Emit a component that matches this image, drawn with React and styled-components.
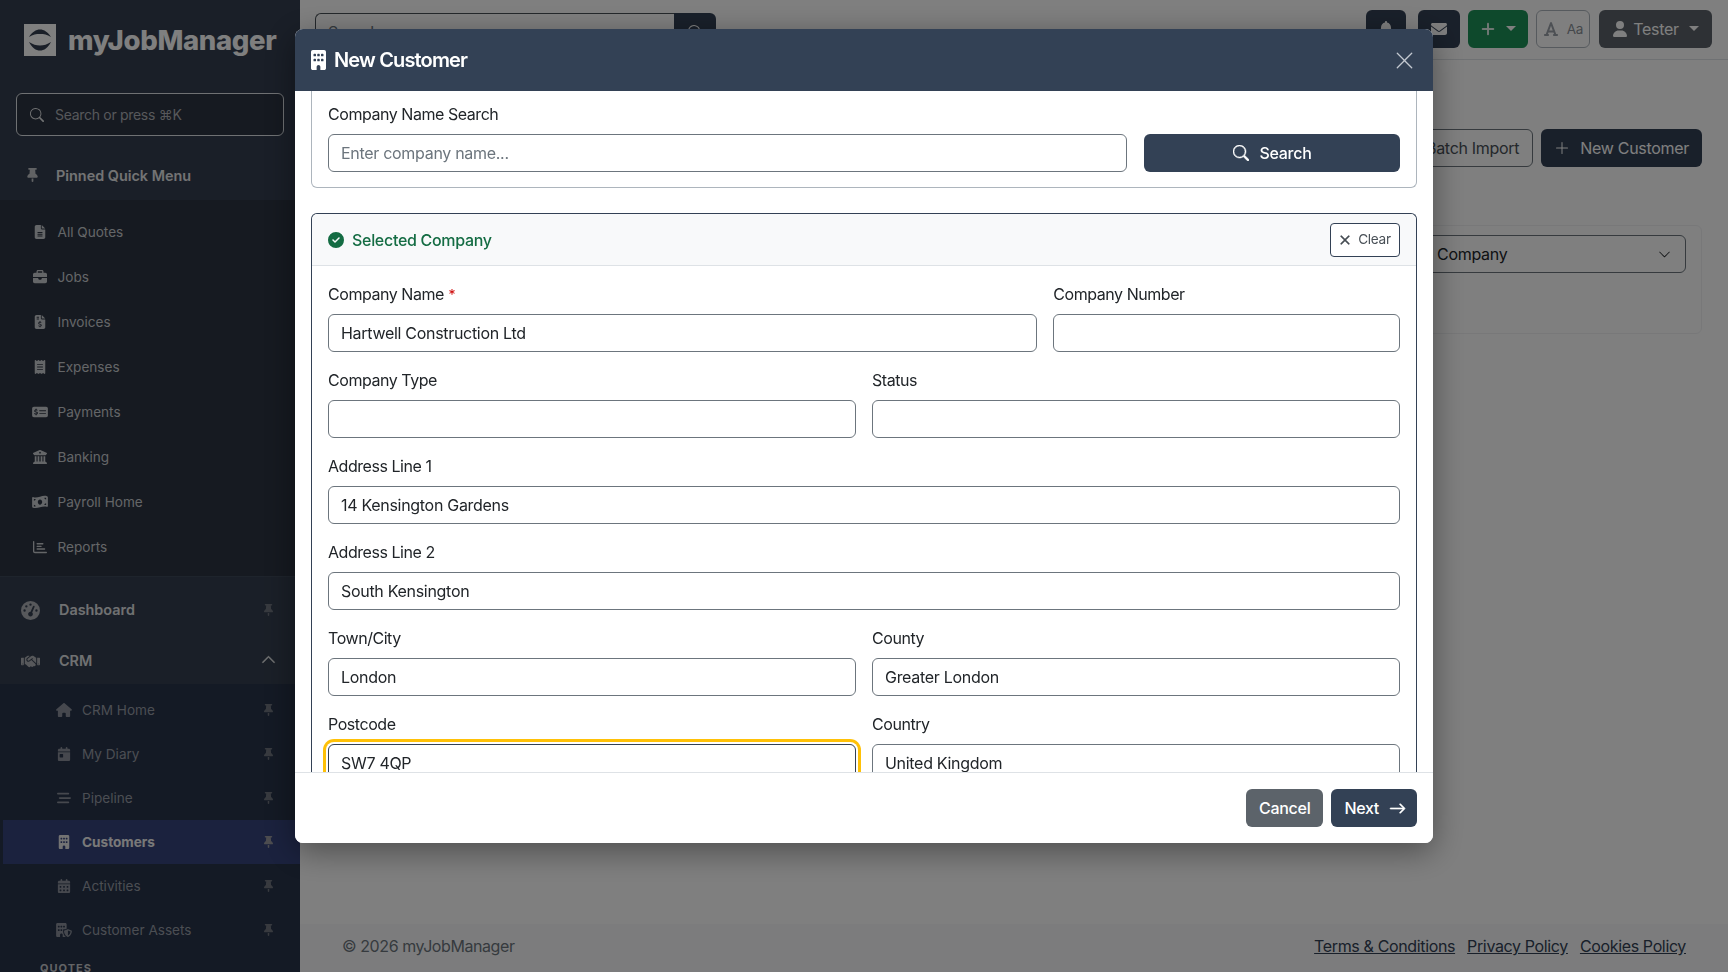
import React from 'react';
import styled, { createGlobalStyle } from 'styled-components';
import {
  FaFileLines, FaBriefcase, FaFileInvoiceDollar, FaReceipt, FaMoneyCheckDollar, FaBuildingColumns,
  FaMoneyBillWave, FaRegChartBar, FaThumbtack, FaGaugeHigh, FaHandshake, FaHouse, FaCalendarDay,
  FaBarsStaggered, FaBuilding, FaCalendarDays, FaBuildingShield, FaCircleCheck, FaEnvelope, FaBell, FaUser, FaFont,
} from 'react-icons/fa6';
import { BsSearch, BsX, BsPlusLg, BsArrowRight, BsXLg, BsChevronUp, BsChevronDown } from 'react-icons/bs';

const Global = createGlobalStyle`
  html, body { margin: 0; padding: 0; height: 100%; overflow: hidden; }
  body { font-family: Inter, "Liberation Sans", sans-serif; font-size: 16px; line-height: 1.5; color: #212529; background: #fff; letter-spacing: -.3px; }
  * { box-sizing: border-box; }
`;

const Shell = styled.div`display: flex; width: 1728px; height: 972px; overflow: hidden;`;

/* Sidebar */
const Sidebar = styled.aside`
  width: 300px; flex: none; height: 972px; overflow: hidden; background: #343e50; letter-spacing: 0;
  display: flex; flex-direction: column;
`;
const Brand = styled.div`display: flex; flex: none; gap: 12px; padding: 24px 0 0 24px; height: 93px; align-items: flex-start;`;
const BrandName = styled.span`
  font-family: Inter, sans-serif; font-weight: 800; font-size: 27.5px; line-height: 32px; color: #fff; letter-spacing: -.33px;
`;
const SideSearch = styled.div`
  margin: 0 16px; height: 43px; flex: none; border: 1px solid #dee2e6; border-radius: 6px; background: #2c3442;
  display: flex; align-items: center; gap: 11px; padding: 0 13px; color: #e0e2e4; font-size: 14px; letter-spacing: -.3px;
`;
const SidePlaceholder = styled.span`color: #aeb1b6;`;
const QuickHead = styled.div`
  height: 64px; flex: none; padding: 16px 0 0 27px; display: flex; align-items: center; gap: 18px;
  color: #e6e7e9; font-size: 14.4px; font-weight: 600;
  svg { width: 11px; height: 14px; margin-top: -3px; color: #c2c4c8; flex: none; }
`;
const QuickList = styled.div`background: #2c3442; padding: 10px 0 6px; border-bottom: 1px solid #3d4858; flex: none;`;
const QuickItem = styled.div`
  height: 45px; display: flex; align-items: center; padding-left: 32px; color: #c9ccd0; font-size: 13.6px;
`;
const QuickIcon = styled.span`
  width: 16px; display: flex; justify-content: center; margin-right: 9.5px; margin-top: -2px;
  svg { width: 16px; height: 14px; flex: none; }
`;
const MainRow = styled.div`
  height: ${p => p.$h}px; flex: none; display: flex; align-items: center; padding: ${p => p.$pt || 0}px 27px 0 20px; background: #353f50;
  color: #e0e2e5; font-size: 14.4px; font-weight: 600;
`;
const MainIcon = styled.span`width: 20px; display: flex; justify-content: center; margin-right: 19px; font-size: 19px; color: #aeb1b6;`;
const Spacer = styled.span`flex: 1;`;
const PinIcon = styled.span`
  display: flex; width: 9px; justify-content: center; color: ${p => p.$c || '#70757f'}; margin-top: -1px;
  svg { width: 9px; height: 12px; flex: none; }
`;
const Chevron = styled.span`display: flex; font-size: 15px; color: #e8e9ea; margin-right: -3px; margin-top: -4px; svg { stroke: currentColor; stroke-width: .6; }`;
const SubList = styled.div`background: #28344a; padding-top: 4px; flex: 1;`;
const SubItem = styled.div`
  height: 44px; display: flex; align-items: center; padding: 0 27px 0 56px; margin-left: 3px;
  font-size: 13.6px; font-weight: ${p => (p.$active ? 700 : 400)};
  color: ${p => (p.$active ? '#f2f2f2' : '#979ca6')};
  background: ${p => (p.$active ? '#36447c' : 'transparent')};
`;
const SubIcon = styled.span`
  width: 16px; margin-left: -3px; margin-right: 10px; display: flex; justify-content: center;
  color: ${p => (p.$active ? '#e6e6e6' : '#8c919c')};
  svg { width: 16px; height: 14px; flex: none; }
`;
const SideCaption = styled.div`
  font-size: 11px; font-weight: 700; letter-spacing: 1px; color: #c6c8cc; padding: 8px 0 0 40px;
`;

/* Page behind */
const Main = styled.div`flex: 1; display: flex; flex-direction: column; min-width: 0;`;
const Topbar = styled.header`
  height: 60px; flex: none; display: flex; align-items: flex-start; padding: 10px 16px 0 15px; background: #fff; border-bottom: 1px solid #dee2e6;
`;
const TopSearch = styled.div`display: flex; margin-top: 3px;`;
const TopInput = styled.div`
  width: 359px; height: 38px; border: 1px solid #495057; border-right: 0; border-radius: 6px 0 0 6px; padding: 0 12px;
  line-height: 36px; font-size: 16px; color: #6c757d;
`;
const TopSearchBtn = styled.div`
  width: 42px; height: 38px; background: #334155; color: #fff; border-radius: 0 6px 6px 0; display: flex; align-items: center; justify-content: center; font-size: 15px;
`;
const TopActions = styled.div`margin-left: auto; display: flex; gap: 8px;`;
const TopBtn = styled.div`
  height: 38px; width: ${p => p.$w}px; margin-left: ${p => p.$ml || 0}px; border-radius: 6px; display: flex; align-items: center; justify-content: center;
  background: ${p => p.$bg}; color: ${p => p.$fg || '#fff'}; border: ${p => p.$border ? '1px solid #adb5bd' : '0'}; gap: ${p => p.$gap || 0}px; font-size: 16px;
`;
const StrongPlus = styled(BsPlusLg)`stroke: currentColor; stroke-width: .7;`;
const UserIcon = styled(FaUser)`margin-right: -3px;`;
const TesterName = styled.span`margin-right: 2px;`;
const Caret = styled.span`width: 0; height: 0; border-left: 5px solid transparent; border-right: 5px solid transparent; border-top: 5px solid currentColor; margin-top: -2px;`;
const SmallAa = styled.span`font-size: 13.5px; color: #8a9098;`;
const Content = styled.main`flex: 1; padding: 69px 26px 0 24px; background: #fff;`;
const PageActions = styled.div`display: flex; justify-content: flex-end; gap: 8px;`;
const PageBtn = styled.div`
  height: 38px; padding: 0 13px; border-radius: 6px; display: flex; align-items: center; gap: 10px; font-size: 16px;
  background: ${p => p.$solid ? '#334155' : '#fff'}; color: ${p => p.$solid ? '#fff' : '#495057'}; border: ${p => p.$solid ? '0' : '1px solid #6c757d'};
`;
const FilterCard = styled.section`
  margin-top: 58px; height: 109px; border: 1px solid #f0f1f3; border-radius: 6px; padding: 9px 15px 0; display: flex; justify-content: flex-end;
`;
const FilterSelect = styled.div`
  width: 500px; height: 38px; border: 1px solid #6c757d; border-radius: 6px; padding: 0 14px 0 250px; display: flex; align-items: center; justify-content: space-between;
  font-size: 16px; color: #212529;
`;
const PageFooter = styled.footer`
  height: 48px; flex: none; display: flex; align-items: center; justify-content: space-between; padding: 0 42px 4px 42px;
  background: #f8f9fa; font-size: 16px; color: #6c757d;
`;
const Copyright = styled.span`letter-spacing: -.42px;`;
const FooterLinks = styled.nav`display: flex; gap: 12px; letter-spacing: -.36px;`;
const FooterLink = styled.a`color: #334155; text-decoration: underline;`;

/* Modal */
const Backdrop = styled.div`
  position: fixed; inset: 0; background: rgba(0,0,0,.5); padding: 29px 0 0 295px;
`;
const Dialog = styled.div`
  width: 1138px; height: 814px; background: #fff; border-radius: 8px; display: flex; flex-direction: column; overflow: hidden;
  box-shadow: 0 8px 32px rgba(0,0,0,.4);
`;
const DialogHead = styled.div`
  height: 62px; flex: none; background: #334155; color: #fff; display: flex; align-items: center; padding: 0 18px 0 16px;
`;
const DialogTitle = styled.h5`
  margin: 0; font-size: 20px; font-weight: 600; line-height: 30px; display: flex; align-items: center; gap: 8px; letter-spacing: -.85px;
  svg { width: 15px; height: 20px; }
`;
const CloseBtn = styled.span`margin-left: auto; display: flex; font-size: 21px; color: #c3c8d0;`;
const DialogBody = styled.div`flex: 1; overflow: hidden; padding: 0 16px; min-height: 0;`;
const SearchCard = styled.section`
  border: 1px solid #adb5bd; border-top: 0; border-radius: 0 0 6px 6px; padding: 11px 16px 15px;
`;
const Label = styled.label`display: block; font-size: 16px; line-height: 24px; margin-bottom: 8px; color: #212529; white-space: nowrap; letter-spacing: -.45px;`;
const Req = styled.span`color: #c00; font-size: 14px; line-height: 1; margin-left: 1px;`;
const SearchRow = styled.div`display: flex; gap: 17px;`;
const Input = styled.div`
  height: 38px; width: 100%; border: 1px solid ${p => p.$focus ? '#334155' : '#6c757d'}; border-radius: 6px; padding: 0 12px; line-height: 36px;
  font-size: 16px; color: ${p => p.$ph ? '#6c757d' : '#212529'}; background: #fff; white-space: nowrap;
  ${p => p.$focus && 'box-shadow: 0 0 0 2px #fff, 0 0 0 5px #ffc107;'}
`;
const SearchButton = styled.div`
  width: 256px; flex: none; height: 38px; border-radius: 6px; background: #334155; color: #fff; display: flex; align-items: center; justify-content: center; gap: 11px; font-size: 16px; font-weight: 500;
  svg { stroke: currentColor; stroke-width: .5; font-size: 16px; }
`;
const ResultCard = styled.section`margin-top: 25px; border: 1px solid #334155; border-bottom: 0; border-radius: 6px 6px 0 0;`;
const ResultHead = styled.div`
  height: 52px; background: #f8f9fa; border-bottom: 1px solid #dee2e6; display: flex; align-items: center; padding: 0 16px; border-radius: 6px 6px 0 0;
`;
const ResultTitle = styled.div`display: flex; align-items: center; gap: 8px; color: #146c43; font-size: 16px; font-weight: 500;`;
const ClearBtn = styled.div`
  margin-left: auto; width: 70px; height: 34px; border: 1px solid #334155; border-radius: 4px; background: #fff; color: #495057; display: flex; align-items: center; justify-content: center; gap: 3px; font-size: 13.6px;
  padding-right: 4px; svg { stroke: currentColor; stroke-width: .4; }
`;
const ResultBody = styled.div`padding: 16px 16px 0; display: grid; grid-template-columns: repeat(12, 1fr); column-gap: 16px; row-gap: 16px;`;
const Field = styled.div`grid-column: span ${p => p.$span}; min-width: 0;`;
const DialogFoot = styled.div`
  height: 71px; flex: none; border-top: 1px solid #dee2e6; display: flex; justify-content: flex-end; align-items: flex-start; gap: 8px; padding: 16px 16px 0; background: #fff;
`;
const FootBtn = styled.div`
  height: 38px; padding: 0 13px; border-radius: 6px; background: ${p => p.$bg}; color: #fff; display: flex; align-items: center; gap: 10px; font-size: 16px; font-weight: 500;
  svg { stroke: currentColor; stroke-width: .6; margin-right: -2px; }
`;

const LogoMark = () => (
  <svg width="32" height="32" viewBox="0 0 32 32" style={{ display: 'block', flex: 'none' }}>
    <rect width="32" height="32" fill="#fff" />
    <path d="M5 13 C8 8 12 5.5 16 5.5 C20 5.5 24 8 27 13 C23 10.5 20 10 16 10 C12 10 9 10.5 5 13 Z" fill="#343e50" />
    <path d="M5 18 C9 20.5 12 21.5 16 21.5 C20 21.5 23 20.5 27 18 C24 24 20 26.5 16 26.5 C12 26.5 8 24 5 18 Z" fill="#343e50" />
  </svg>
);

const quick = [
  [FaFileLines, 'All Quotes'], [FaBriefcase, 'Jobs'], [FaFileInvoiceDollar, 'Invoices'], [FaReceipt, 'Expenses'],
  [FaMoneyCheckDollar, 'Payments'], [FaBuildingColumns, 'Banking'], [FaMoneyBillWave, 'Payroll Home'], [FaRegChartBar, 'Reports'],
];
const sub = [
  [FaHouse, 'CRM Home'], [FaCalendarDay, 'My Diary'], [FaBarsStaggered, 'Pipeline'], [FaBuilding, 'Customers', true],
  [FaCalendarDays, 'Activities'], [FaBuildingShield, 'Customer Assets'],
];
const fields = [
  [8, 'Company Name', 'Hartwell Construction Ltd', true], [4, 'Company Number', ''],
  [6, 'Company Type', ''], [6, 'Status', ''],
  [12, 'Address Line 1', '14 Kensington Gardens'],
  [12, 'Address Line 2', 'South Kensington'],
  [6, 'Town/City', 'London'], [6, 'County', 'Greater London'],
  [6, 'Postcode', 'SW7 4QP', false, true], [6, 'Country', 'United Kingdom'],
];

export default function App() {
  return (
    <>
      <Global />
      <Shell>
        <Sidebar>
          <Brand><LogoMark /><BrandName>myJobManager</BrandName></Brand>
          <SideSearch><BsSearch /><SidePlaceholder>Search or press ⌘K</SidePlaceholder></SideSearch>
          <QuickHead><FaThumbtack />Pinned Quick Menu</QuickHead>
          <QuickList>
            {quick.map(([I, t]) => <QuickItem key={t}><QuickIcon><I /></QuickIcon>{t}</QuickItem>)}
          </QuickList>
          <MainRow $h={59} $pt={7}><MainIcon><FaGaugeHigh /></MainIcon>Dashboard<Spacer /><PinIcon><FaThumbtack /></PinIcon></MainRow>
          <MainRow $h={48} $pt={2}><MainIcon><FaHandshake /></MainIcon>CRM<Spacer /><Chevron><BsChevronUp /></Chevron></MainRow>
          <SubList>
            {sub.map(([I, t, a]) => (
              <SubItem key={t} $active={a}><SubIcon $active={a}><I /></SubIcon>{t}<Spacer /><PinIcon $c={a ? '#9a9aa0' : undefined}><FaThumbtack /></PinIcon></SubItem>
            ))}
            <SideCaption>QUOTES</SideCaption>
          </SubList>
        </Sidebar>
        <Main>
          <Topbar>
            <TopSearch><TopInput>Search...</TopInput><TopSearchBtn><BsSearch /></TopSearchBtn></TopSearch>
            <TopActions>
              <TopBtn $w={40} $bg="#334155"><FaBell /></TopBtn>
              <TopBtn $w={42} $ml={4} $bg="#334155"><FaEnvelope /></TopBtn>
              <TopBtn $w={60} $bg="#1d9258" $gap={10}><StrongPlus /><Caret /></TopBtn>
              <TopBtn $w={54} $bg="#fff" $fg="#9aa0a8" $border $gap={8}><FaFont /><SmallAa>Aa</SmallAa></TopBtn>
              <TopBtn $w={113} $ml={1} $bg="#5c636a" $gap={8}><UserIcon /><TesterName>Tester</TesterName><Caret /></TopBtn>
            </TopActions>
          </Topbar>
          <Content>
            <PageActions>
              <PageBtn>Batch Import</PageBtn>
              <PageBtn $solid><BsPlusLg />New Customer</PageBtn>
            </PageActions>
            <FilterCard>
              <FilterSelect>Company<BsChevronDown size={13} /></FilterSelect>
            </FilterCard>
          </Content>
          <PageFooter>
            <Copyright>© 2026 myJobManager</Copyright>
            <FooterLinks>
              <FooterLink>Terms &amp; Conditions</FooterLink>
              <FooterLink>Privacy Policy</FooterLink>
              <FooterLink>Cookies Policy</FooterLink>
            </FooterLinks>
          </PageFooter>
        </Main>
      </Shell>
      <Backdrop>
        <Dialog>
          <DialogHead>
            <DialogTitle><FaBuilding />New Customer</DialogTitle>
            <CloseBtn><BsXLg /></CloseBtn>
          </DialogHead>
          <DialogBody>
            <SearchCard>
              <Label>Company Name Search</Label>
              <SearchRow>
                <Input $ph>Enter company name...</Input>
                <SearchButton><BsSearch />Search</SearchButton>
              </SearchRow>
            </SearchCard>
            <ResultCard>
              <ResultHead>
                <ResultTitle><FaCircleCheck />Selected Company</ResultTitle>
                <ClearBtn><BsX size={20} />Clear</ClearBtn>
              </ResultHead>
              <ResultBody>
                {fields.map(([span, label, value, req, focus]) => (
                  <Field key={label} $span={span}>
                    <Label>{label}{req && <Req> *</Req>}</Label>
                    <Input $focus={focus}>{value}</Input>
                  </Field>
                ))}
              </ResultBody>
            </ResultCard>
          </DialogBody>
          <DialogFoot>
            <FootBtn $bg="#5c636a">Cancel</FootBtn>
            <FootBtn $bg="#334155">Next<BsArrowRight size={17} /></FootBtn>
          </DialogFoot>
        </Dialog>
      </Backdrop>
    </>
  );
}
